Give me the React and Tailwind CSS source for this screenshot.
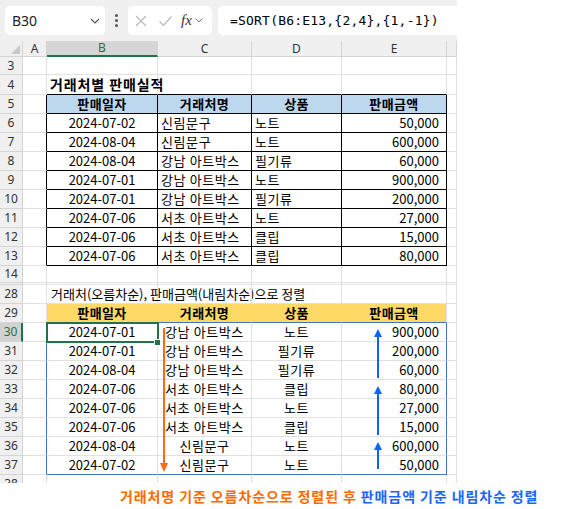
import React from 'react';
import { twMerge } from 'tailwind-merge';

const KR = "font-['Noto_Sans_CJK_KR',sans-serif]";

// column widths A..F (row header is 23px)
const W = ['w-[24px]', 'w-[111px]', 'w-[94px]', 'w-[90px]', 'w-[105px]', 'w-[10px]'];

const BASE =
  'shrink-0 h-full flex items-center whitespace-nowrap border-r border-b border-r-[#e1e1e1] border-b-[#e1e1e1] text-[13px] text-black';

const HEAD =
  "w-[23px] shrink-0 h-full flex items-center justify-center border-r border-b border-r-[#d4d4d4] border-b-[#d4d4d4] bg-[#f0f0f0] text-[12px] text-[#333] font-['Noto_Sans',sans-serif]";

const table1 = [
  ['2024-07-02', '신림문구', '노트', '50,000'],
  ['2024-08-04', '신림문구', '노트', '600,000'],
  ['2024-08-04', '강남 아트박스', '필기류', '60,000'],
  ['2024-07-01', '강남 아트박스', '노트', '900,000'],
  ['2024-07-01', '강남 아트박스', '필기류', '200,000'],
  ['2024-07-06', '서초 아트박스', '노트', '27,000'],
  ['2024-07-06', '서초 아트박스', '클립', '15,000'],
  ['2024-07-06', '서초 아트박스', '클립', '80,000'],
];

const table2 = [
  ['2024-07-01', '강남 아트박스', '노트', '900,000'],
  ['2024-07-01', '강남 아트박스', '필기류', '200,000'],
  ['2024-08-04', '강남 아트박스', '필기류', '60,000'],
  ['2024-07-06', '서초 아트박스', '클립', '80,000'],
  ['2024-07-06', '서초 아트박스', '노트', '27,000'],
  ['2024-07-06', '서초 아트박스', '클립', '15,000'],
  ['2024-08-04', '신림문구', '노트', '600,000'],
  ['2024-07-02', '신림문구', '노트', '50,000'],
];

const Cell = ({ i, className, children }) => (
  <div className={twMerge(BASE, W[i], className)}>{children}</div>
);

const Row = ({ n, h = 'h-[19px]', sel, dbl, children }) => (
  <div className={twMerge('flex', h)}>
    <div
      className={twMerge(
        HEAD,
        sel && 'bg-[#d2d2d2] text-[#217346] border-r-2 border-r-[#217346]',
        dbl && 'border-b-[3px] border-double'
      )}
    >
      {n}
    </div>
    {children}
  </div>
);

const Blank = ({ dbl }) =>
  [0, 1, 2, 3, 4, 5].map((i) => (
    <Cell key={i} i={i} className={dbl ? 'border-b-[3px] border-double' : ''} />
  ));

const Chevron = () => (
  <svg width="12" height="8" viewBox="0 0 12 8" fill="none" stroke="#555" strokeWidth="1.2">
    <path d="M2 2 L6 6 L10 2" />
  </svg>
);

export default function App() {
  return (
    <div className={twMerge('relative w-[570px] h-[509px] bg-white overflow-hidden', KR)}>
      <div className="w-[457px] h-[483px] overflow-hidden">
        {/* formula bar */}
        <div className="h-[41px] bg-[#f0f0f0] flex items-center">
          <div className="ml-[5px] w-[100px] h-[29px] bg-white rounded-[5px] flex items-center justify-between pl-[7px] pr-[4px]">
            <span className="text-[14px] text-[#222] font-['Noto_Sans',sans-serif]">B30</span>
            <Chevron />
          </div>
          <div className="w-[23px] flex flex-col items-center gap-[2px]">
            <span className="w-[3px] h-[3px] rounded-full bg-[#555]" />
            <span className="w-[3px] h-[3px] rounded-full bg-[#555]" />
            <span className="w-[3px] h-[3px] rounded-full bg-[#555]" />
          </div>
          <div className="w-[84px] h-[29px] bg-white rounded-[5px] flex items-center pl-[6px]">
            <svg width="14" height="14" viewBox="0 0 14 14" stroke="#b8b8b8" strokeWidth="1.2">
              <path d="M2 2 L12 12 M12 2 L2 12" />
            </svg>
            <svg className="ml-[10px]" width="15" height="14" viewBox="0 0 15 14" fill="none" stroke="#b8b8b8" strokeWidth="1.2">
              <path d="M1.5 7.5 L5.5 11.5 L13.5 2.5" />
            </svg>
            <span className="ml-[8px] text-[15px] italic text-[#333] font-['Liberation_Serif',serif] leading-none">fx</span>
            <svg className="ml-[2px]" width="10" height="7" viewBox="0 0 10 7" fill="none" stroke="#777" strokeWidth="1">
              <path d="M1.5 1.5 L5 5 L8.5 1.5" />
            </svg>
          </div>
          <div className="ml-[6px] flex-1 h-[29px] bg-white rounded-l-[5px] flex items-center pl-[12px]">
            <span className="text-[13px] tracking-[0.2px] text-black font-['DejaVu_Sans_Mono',monospace]">
              =SORT(B6:E13,{'{'}2,4{'}'},{'{'}1,-1{'}'})
            </span>
          </div>
        </div>

        {/* column headers */}
        <div className="flex h-[16px] font-['Noto_Sans',sans-serif] text-[12px] text-[#333]">
          <div className="relative w-[23px] shrink-0 h-full bg-[#f0f0f0] border-r border-b border-r-[#d4d4d4] border-b-[#d4d4d4]">
            <svg className="absolute right-[2px] bottom-[2px]" width="9" height="9" viewBox="0 0 9 9">
              <polygon points="9,0 9,9 0,9" fill="#c8c8c8" />
            </svg>
          </div>
          {['A', 'B', 'C', 'D', 'E', ''].map((c, i) => (
            <div
              key={i}
              className={twMerge(
                'shrink-0 h-full flex items-center justify-center bg-[#f0f0f0] border-r border-b border-r-[#d4d4d4] border-b-[#d4d4d4]',
                W[i],
                i === 1 && 'bg-[#d6d6d6] text-[#217346] border-b-2 border-b-[#217346]'
              )}
            >
              {c}
            </div>
          ))}
        </div>

        <Row n="3" h="h-[18px]">
          <Blank />
        </Row>

        <Row n="4" h="h-[20px]">
          <Cell i={0} />
          <Cell i={1} className="border-b-black pl-[3px] text-[14px] font-bold tracking-[0.9px]">
            거래처별 판매실적
          </Cell>
          <Cell i={2} className="border-b-black" />
          <Cell i={3} className="border-b-black" />
          <Cell i={4} className="border-b-black" />
          <Cell i={5} />
        </Row>

        <Row n="5">
          <Cell i={0} className="border-r-black" />
          {['판매일자', '거래처명', '상품', '판매금액'].map((t, k) => (
            <Cell
              key={k}
              i={k + 1}
              className="bg-[#bdd7ee] border-r-black border-b-black justify-center font-bold tracking-[0.4px]"
            >
              {t}
            </Cell>
          ))}
          <Cell i={5} />
        </Row>

        {table1.map((r, k) => (
          <Row key={k} n={String(6 + k)}>
            <Cell i={0} className="border-r-black" />
            <Cell i={1} className="border-r-black border-b-black justify-center">{r[0]}</Cell>
            <Cell i={2} className="border-r-black border-b-black pl-[3px] tracking-[0.6px]">{r[1]}</Cell>
            <Cell i={3} className="border-r-black border-b-black pl-[3px] tracking-[0.6px]">{r[2]}</Cell>
            <Cell i={4} className="border-r-black border-b-black justify-end pr-[7px]">{r[3]}</Cell>
            <Cell i={5} />
          </Row>
        ))}

        <Row n="14" dbl>
          <Blank dbl />
        </Row>

        <Row n="28">
          <Cell i={0} />
          <Cell i={1} className="pl-[4px]">거래처(오름차순), 판매금액(내림차순)으로 정렬</Cell>
          <Cell i={2} />
          <Cell i={3} />
          <Cell i={4} />
          <Cell i={5} />
        </Row>

        <Row n="29">
          <Cell i={0} />
          {['판매일자', '거래처명', '상품', '판매금액'].map((t, k) => (
            <Cell
              key={k}
              i={k + 1}
              className={twMerge(
                'bg-[#ffd966] border-b-[#4472c4] justify-center font-bold tracking-[0.4px]',
                k < 3 && 'border-r-[#ffd966]'
              )}
            >
              {t}
            </Cell>
          ))}
          <Cell i={5} />
        </Row>

        {table2.map((r, k) => {
          const last = k === table2.length - 1;
          const b = last ? 'border-b-[#4472c4]' : '';
          return (
            <Row key={k} n={String(30 + k)} sel={k === 0}>
              <Cell i={0} className="border-r-[#4472c4]" />
              <Cell i={1} className={twMerge('justify-center', b)}>{r[0]}</Cell>
              <Cell i={2} className={twMerge('justify-center tracking-[0.6px]', b)}>{r[1]}</Cell>
              <Cell i={3} className={twMerge('justify-center tracking-[0.6px]', b)}>{r[2]}</Cell>
              <Cell i={4} className={twMerge('justify-end pr-[7px] border-r-[#4472c4]', b)}>{r[3]}</Cell>
              <Cell i={5} />
            </Row>
          );
        })}

        <Row n="38">
          <Blank />
        </Row>
      </div>

      <div className="pl-[120px] h-[26px] flex items-center text-[14px] font-bold tracking-[0.9px] whitespace-nowrap">
        <span className="text-[#ff6a00]">거래처명 기준 오름차순으로 정렬된 후</span>
        <span className="ml-[4px] text-[#1a66ff]">판매금액 기준 내림차순 정렬</span>
      </div>

      {/* selection of B30 */}
      <div className="absolute left-[46px] top-[322px] w-[113px] h-[21px] border-2 border-[#217346] pointer-events-none" />
      <div className="absolute left-[154px] top-[339px] w-[7px] h-[7px] bg-[#217346] border border-white pointer-events-none" />

      {/* sort arrows */}
      <svg className="absolute left-0 top-0 pointer-events-none" width="570" height="509">
        <g stroke="#ff6a13" strokeWidth="2">
          <line x1="164" y1="328" x2="164" y2="465" />
        </g>
        <polygon points="160,463 168,463 164,472" fill="#ff6a13" />
        <g stroke="#0a64f5" strokeWidth="2">
          <line x1="378" y1="335" x2="378" y2="378" />
          <line x1="378" y1="392" x2="378" y2="435" />
          <line x1="378" y1="448" x2="378" y2="469" />
        </g>
        <g fill="#0a64f5">
          <polygon points="374,337 382,337 378,329" />
          <polygon points="374,394 382,394 378,386" />
          <polygon points="374,450 382,450 378,442" />
        </g>
      </svg>
    </div>
  );
}
